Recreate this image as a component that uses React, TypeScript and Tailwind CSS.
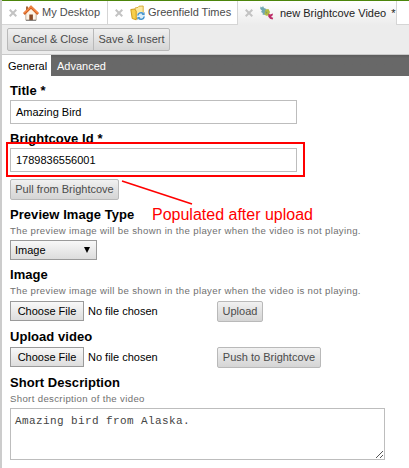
import React from "react";

function Close() {
  return (
    <svg className="h-2 w-2 shrink-0" viewBox="0 0 8 8" stroke="#c3c3c3" strokeWidth="2">
      <path d="M0.7 0.7L7.3 7.3M7.3 0.7L0.7 7.3" />
    </svg>
  );
}

function House() {
  return (
    <svg className="h-4 w-4 shrink-0" viewBox="0 0 16 16">
      <path d="M3 1.5h2v4H3z" fill="#a5643c" />
      <path d="M2.8 8L8 3L13.2 8V15.2H2.8Z" fill="#fdf3e6" stroke="#b5a08c" strokeWidth=".8" />
      <path d="M6.3 9.5h3.6v5.8H6.3z" fill="#8a4a25" />
      <path d="M3 15.3H13" stroke="#777" strokeWidth="1" />
      <path d="M.9 9L8 2.1L15.1 9" fill="none" stroke="#d4601f" strokeWidth="2.6" />
      <path d="M1.2 8L8 1.5L14.8 8" fill="none" stroke="#f58a48" strokeWidth="1.2" />
    </svg>
  );
}

function Folder() {
  return (
    <svg className="h-4 w-4 shrink-0" viewBox="0 0 16 16">
      <path d="M5 3L8 2.4L9 1.2L13.2 1V12L5 14Z" fill="#fbe9a0" stroke="#d5a52b" strokeWidth=".9" />
      <path d="M.8 4.5L4.5 4L6.2 6V14.8L2.2 13.5Z" fill="#f6cf4c" stroke="#c99412" strokeWidth=".9" />
      <circle cx="11" cy="11" r="4" fill="#dceffa" />
      <path d="M7.8 10.5a3.2 3.2 0 0 1 5.4-1.9M14.2 11.5a3.2 3.2 0 0 1-5.4 1.9" fill="none" stroke="#4695ce" strokeWidth="1.5" />
      <path d="M14.6 7v3h-3zM7.4 15v-3h3z" fill="#4695ce" />
    </svg>
  );
}

function Bird() {
  return (
    <svg className="h-4 w-4 shrink-0" viewBox="0 0 16 16">
      <path d="M1.5 1.5L3 2.6L4 1L5 3L7.5 4L7.2 8L5.5 10L3.5 9.5L3.8 8L2 7L3 5.5L1.2 4Z" fill="#72a9b3" />
      <path d="M6.5 4.5L9.5 4L11 7L9.6 10.5L7 10.8L5.4 9Z" fill="#b3bb45" />
      <path d="M6.5 6L8.5 7.5L7 9Z" fill="#7c9f62" />
      <path d="M9.5 8.5L11 9.5L14 8.4L13.6 10.4L12.3 11.2L12.6 12.2L14.2 12.8L13.6 14.4L11 13.8L9.2 11.5Z" fill="#bd2c68" />
    </svg>
  );
}

const button =
  "box-border flex h-[21px] items-center justify-center whitespace-nowrap rounded-[2px] border border-[#b9b9b9] bg-linear-to-b from-[#f1f1f1] via-[#e2e2e2] to-[#d5d5d5] text-[#4b4b4b]";
const fileButton =
  "flex h-5 w-[74px] items-center justify-center whitespace-nowrap border border-[#9a9a9a] bg-linear-to-b from-[#f8f8f8] to-[#dddddd]";

function Label({ children }: { children: React.ReactNode }) {
  return <div className="h-4 whitespace-nowrap text-[13px] leading-4 font-bold tracking-[0.05px]">{children}</div>;
}

function Help({ children }: { children: React.ReactNode }) {
  return <div className="h-4 whitespace-nowrap text-[9.6px] leading-4 tracking-[0.35px] text-[#707070]">{children}</div>;
}

function FileRow({ action, width }: { action: string; width: string }) {
  return (
    <div className="flex h-[21px] items-start">
      <button className={fileButton}>Choose File</button>
      <span className="ml-1 w-[129px] leading-5">No file chosen</span>
      <button className={`${button} ${width}`}>{action}</button>
    </div>
  );
}

export default function App() {
  return (
    <div className="h-[468px] w-[409px] overflow-hidden border-l-2 border-[#cccccc] bg-white font-['Liberation_Sans',Arial,sans-serif] text-[11px] text-black">
      <div className="-ml-0.5 h-px bg-[#4c850b]" />
      <div className="flex h-6 text-[#4b4b4b]">
        <div className="flex w-[106px] items-center border-r border-b border-[#d5d5d5] pl-[7px]">
          <Close />
          <span className="ml-1.5"><House /></span>
          <span className="ml-[3px] whitespace-nowrap">My Desktop</span>
        </div>
        <div className="flex w-[130px] items-center border-r border-b border-[#d5d5d5] pl-[7px]">
          <Close />
          <span className="ml-[7px]"><Folder /></span>
          <span className="ml-0.5 whitespace-nowrap">Greenfield Times</span>
        </div>
        <div className="flex w-[159px] items-center border-r border-[#d5d5d5] bg-linear-to-b from-white to-[#ececec] pl-[7px] text-[#222]">
          <Close />
          <span className="ml-1.5"><Bird /></span>
          <span className="ml-[5px] whitespace-nowrap">new Brightcove Video</span>
          <span className="ml-[5px]">*</span>
        </div>
        <div className="flex-1 border-b border-[#d5d5d5]" />
      </div>
      <div className="flex h-[30px] border-b border-[#c9c9c9] bg-[#ececec] pt-[3px] pl-[5px]">
        <div className="flex h-[23px] rounded-[2px] border border-[#b9b9b9] bg-linear-to-b from-[#f0f0f0] to-[#d5d5d5] text-[#4b4b4b]">
          <button className="w-[86px] whitespace-nowrap border-r border-[#b9b9b9]">Cancel &amp; Close</button>
          <button className="w-[75px] whitespace-nowrap">Save &amp; Insert</button>
        </div>
      </div>
      <nav className="flex h-[21px] bg-linear-to-b from-[#5c5c5c] to-[#686868] to-15% leading-[22px] text-white">
        <div className="w-[49px] bg-white pl-[6px] text-black">General</div>
        <div className="pl-1.5">Advanced</div>
      </nav>
      <main className="relative pt-[7px] pl-2">
        <Label>Title *</Label>
        <div className="mt-px flex h-6 w-[287px] items-center border border-[#bdbdbd] pl-[5px]">Amazing Bird</div>
        <div className="mt-[7px]"><Label>Brightcove Id *</Label></div>
        <div className="mt-px flex h-6 w-[287px] items-center border border-[#bdbdbd] pl-[5px]">1789836556001</div>
        <button className={`${button} mt-[7px] w-[109px]`}>Pull from Brightcove</button>
        <div className="mt-[7px]"><Label>Preview Image Type</Label></div>
        <Help>The preview image will be shown in the player when the video is not playing.</Help>
        <div className="mt-px flex h-5 w-[87px] items-center justify-between border border-[#9a9a9a] bg-linear-to-b from-[#f8f8f8] to-[#dddddd] pr-1.5 pl-1">
          <span>Image</span>
          <svg className="h-1.5 w-1.5" viewBox="0 0 6 6"><path d="M0 0H6L3 6Z" /></svg>
        </div>
        <div className="mt-[7px]"><Label>Image</Label></div>
        <Help>The preview image will be shown in the player when the video is not playing.</Help>
        <div className="mt-0.5"><FileRow action="Upload" width="w-[46px]" /></div>
        <div className="mt-[7px]"><Label>Upload video</Label></div>
        <div className="mt-0.5"><FileRow action="Push to Brightcove" width="w-[104px]" /></div>
        <div className="mt-[7px]"><Label>Short Description</Label></div>
        <Help>Short description of the video</Help>
        <div className="relative mt-px h-[52px] w-[375px] border border-[#bdbdbd] pt-1 pl-1 font-['Liberation_Mono',monospace] text-[11px] leading-4 tracking-[0.4px] text-[#444]">
          Amazing bird from Alaska.
          <svg className="absolute right-px bottom-px h-[7px] w-[7px]" viewBox="0 0 7 7" stroke="#555">
            <path d="M0 7L7 0M4 7L7 4" />
          </svg>
        </div>
        <div className="absolute top-[66px] left-1 h-[35px] w-[299px] border-2 border-[#ff0000]" />
        <svg className="absolute top-[103px] left-[119px] h-8 w-[75px]" viewBox="0 0 75 32">
          <path d="M1 2L71 25" stroke="#ff0000" strokeWidth="1.6" />
        </svg>
        <div className="absolute top-[129px] left-[150px] whitespace-nowrap text-base leading-5 text-[#ff0000]">Populated after upload</div>
      </main>
    </div>
  );
}
